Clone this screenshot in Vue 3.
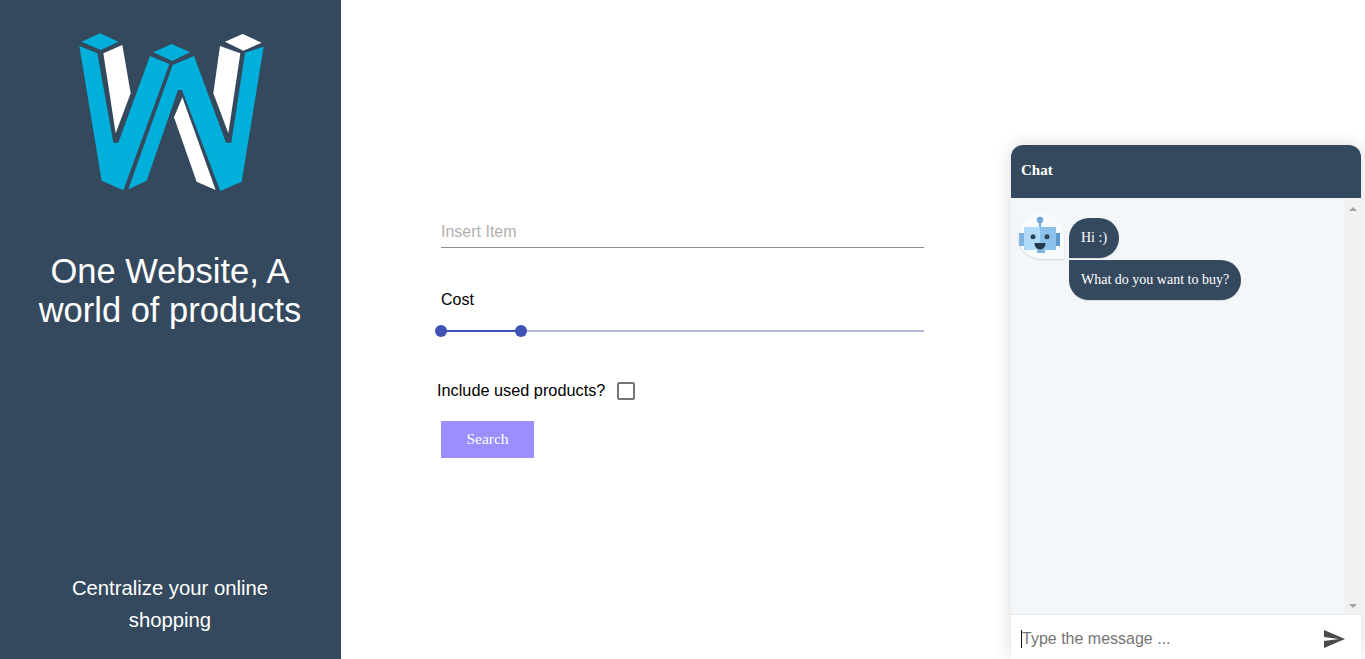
<script setup>
const messages = [
  { id: 1, text: 'Hi :)', kind: 'first' },
  { id: 2, text: 'What do you want to buy?', kind: 'second' }
]
</script>

<template>
  <div class="page">
    <aside class="side">
      <svg class="logo" viewBox="0 0 660 540" width="220" height="180">
        <g fill="#00b0db">
          <polygon points="65,65 120,40 175,65 122,90" />
          <polygon points="58,78 112,100 160,368 175,368 270,108 328,132 190,511 125,482" />
          <polygon points="280,97 335,72 390,97 337,123" />
          <polygon points="338,135 402,108 498,368 514,368 555,98 611,80 545,485 481,513 366,210 354,210 260,482 205,508" />
        </g>
        <g fill="#ffffff">
          <polygon points="130,100 187,75 212,220 167,340" />
          <polygon points="480,78 541,100 505,340 460,220" />
          <polygon points="495,65 548,42 605,68 550,92" />
          <polygon points="342,292 367,232 467,510 410,485" />
        </g>
      </svg>
      <h1 class="title">One Website, A<br />world of products</h1>
      <p class="tag">Centralize your online<br />shopping</p>
    </aside>

    <main class="form">
      <div class="field">Insert Item</div>
      <div class="cost">Cost</div>
      <div class="slider">
        <span class="fill"></span>
        <span class="thumb thumb-a"></span>
        <span class="thumb thumb-b"></span>
      </div>
      <label class="used">
        <span class="used-text">Include used products?</span>
        <span class="box"></span>
      </label>
      <button class="search" type="button">Search</button>
    </main>

    <section class="chat">
      <header class="chat-head">Chat</header>
      <div class="chat-body">
        <div class="messages">
          <div class="avatar">
            <svg viewBox="0 0 46 46" width="46" height="46">
              <rect x="21" y="8" width="2" height="7" fill="#6ea6d8" />
              <circle cx="22" cy="7" r="3.200" fill="#6ea6d8" />
              <rect x="1" y="20" width="5" height="13" fill="#7fb3e0" />
              <rect x="38" y="20" width="4" height="13" fill="#5e97cc" />
              <rect x="6" y="14" width="16" height="23" fill="#b0daf8" />
              <rect x="22" y="14" width="16" height="23" fill="#8cc1ee" />
              <rect x="19" y="37" width="8" height="3" fill="#7fb3e0" />
              <circle cx="15" cy="23.700" r="2.500" fill="#2f4558" />
              <circle cx="29" cy="23.700" r="2.500" fill="#2f4558" />
              <path d="M16.500 30h11c0 4-2.500 6.500-5.500 6.500S16.500 34 16.500 30z" fill="#25384a" />
            </svg>
          </div>
          <div class="bubbles">
            <div v-for="m in messages" :key="m.id" class="bubble" :class="m.kind">{{ m.text }}</div>
          </div>
        </div>
        <div class="scroll">
          <span class="arrow up"></span>
          <span class="arrow down"></span>
        </div>
      </div>
      <footer class="chat-input">
        <span class="type">Type the message ...</span>
        <svg class="send" viewBox="0 0 24 24" width="24" height="24">
          <path d="M2.010 21 23 12 2.010 3 2 10l15 2-15 2z" fill="#4a4a4a" />
        </svg>
      </footer>
    </section>
  </div>
</template>

<style>
html, body { margin: 0; overflow: hidden; }
</style>

<style scoped>
.page {
  position: relative;
  display: flex;
  height: 659px;
  overflow: hidden;
  background: #fff;
  font-family: "Liberation Sans", Arial, sans-serif;
}
.side {
  width: 341px;
  flex: none;
  display: flex;
  flex-direction: column;
  background: #35495e;
  color: #fff;
  padding: 20px 1px 0 0;
  box-sizing: border-box;
  text-align: center;
}
.logo { display: block; margin-left: 60px; }
.title {
  margin: 52px 0 0;
  font-size: 34.500px;
  line-height: 39px;
  font-weight: 400;
}
.tag {
  margin: auto 0 23px;
  font-size: 20.300px;
  line-height: 32px;
}
.form {
  padding: 216px 0 0 100px;
  width: 483px;
  flex: none;
}
.field {
  height: 31px;
  line-height: 31px;
  font-size: 16px;
  color: #b3aeae;
  border-bottom: 1px solid #8c8c8c;
}
.cost {
  margin-top: 42px;
  font-size: 16px;
  line-height: 20px;
  color: #000;
}
.slider {
  position: relative;
  margin-top: 20px;
  height: 2px;
  background: #b2b9e1;
}
.fill {
  position: absolute;
  left: 0;
  top: 0;
  width: 80px;
  height: 2px;
  background: #3f51b5;
}
.thumb {
  position: absolute;
  top: -5px;
  width: 12px;
  height: 12px;
  margin-left: -6px;
  border-radius: 50%;
  background: #3f51b5;
}
.thumb-a { left: 0; }
.thumb-b { left: 80px; }
.used {
  display: flex;
  align-items: center;
  gap: 12px;
  margin: 48px 0 0 -4px;
  font-size: 16.300px;
  line-height: 20px;
  color: #000;
}
.used-text { padding-bottom: 2px; }
.box {
  width: 18px;
  height: 18px;
  box-sizing: border-box;
  border: 2px solid #757575;
  border-radius: 2px;
}
.search {
  display: block;
  width: 93px;
  height: 37px;
  margin-top: 19px;
  padding: 0 0 2px;
  border: 0;
  background: #9b8fff;
  color: #fff;
  font-family: "Liberation Serif", "Times New Roman", serif;
  font-size: 15.500px;
}
.chat {
  position: absolute;
  left: 1011px;
  top: 145px;
  width: 350px;
  height: 514px;
  display: flex;
  flex-direction: column;
  border-radius: 12px 12px 0 0;
  box-shadow: 0 0 18px rgba(0, 0, 0, 0.14);
  font-family: "Liberation Serif", "Times New Roman", serif;
}
.chat-head {
  height: 53px;
  flex: none;
  display: flex;
  align-items: center;
  padding: 0 0 2px 10px;
  box-sizing: border-box;
  background: #35495e;
  color: #fff;
  font-weight: 700;
  font-size: 15px;
  border-radius: 12px 12px 0 0;
}
.chat-body {
  flex: 1;
  display: flex;
  min-height: 0;
  background: #f4f7f9;
}
.messages {
  flex: 1;
  display: flex;
  align-items: flex-start;
  padding: 15px 0 0 7px;
}
.avatar {
  width: 46px;
  height: 46px;
  flex: none;
  background: #f7fbfd;
  border-radius: 50% 50% 0 50%;
  box-shadow: 0 1px 2px rgba(0, 0, 0, 0.14);
}
.avatar svg { display: block; }
.bubbles {
  margin: 5px 0 0 5px;
  display: flex;
  flex-direction: column;
  align-items: flex-start;
  gap: 2px;
}
.bubble {
  height: 40px;
  line-height: 39px;
  padding: 0 12px;
  box-sizing: border-box;
  background: #35495e;
  color: #fff;
  font-size: 14px;
  box-shadow: 0 1px 1px rgba(0, 0, 0, 0.12);
}
.first { border-radius: 20px 20px 20px 0; }
.second { border-radius: 0 20px 20px 20px; }
.scroll {
  position: relative;
  width: 17px;
  flex: none;
  background: #f1f1f1;
}
.arrow {
  position: absolute;
  left: 5px;
  width: 0;
  height: 0;
  border-left: 4px solid transparent;
  border-right: 4px solid transparent;
}
.up { top: 9px; border-bottom: 4px solid #a3a3a3; }
.down { bottom: 6px; border-top: 4px solid #a3a3a3; }
.chat-input {
  height: 45px;
  flex: none;
  display: flex;
  align-items: center;
  justify-content: space-between;
  padding: 4px 15px 0 10px;
  box-sizing: border-box;
  background: #fff;
  border-top: 1px solid #e8e8e8;
}
.type {
  border-left: 1px solid #111;
  line-height: 18px;
  font-family: "Liberation Sans", Arial, sans-serif;
  font-size: 16px;
  color: #757575;
}
.send { display: block; margin-bottom: 1px; }
</style>
